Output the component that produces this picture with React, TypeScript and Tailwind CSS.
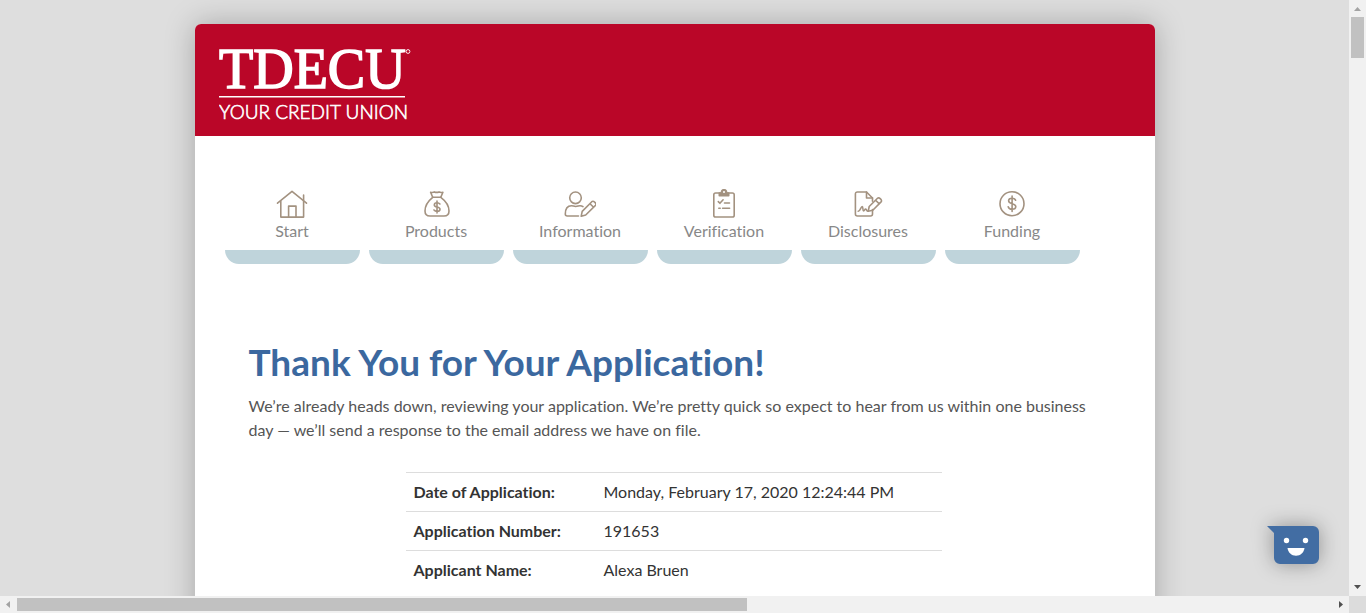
import type { ReactNode } from "react";

function HomeIcon() {
  return (
    <>
      <path d="M1.5 14.2 16 2.400l14.500 11.800" />
      <path d="M4.800 12.300v15.800h22.800V12.300" />
      <path d="M27.600 11.200V6" />
      <path d="M12.600 28V17.100h7.400v10.900" />
    </>
  );
}

function MoneyBagIcon() {
  return (
    <>
      <path d="M12.700 8.300 10.600 3.200c1.800.6 2.600.4 3.800-.3 1.700.7 2.900.7 4.600 0 1.200.7 2.100.9 3.900.3l-2.100 5.100z" />
      <path d="M12.700 8.300C8.700 11.500 5 16.500 5 22c0 3.300 1.900 5 5 5h14c3.100 0 5-1.700 5-5 0-5.500-3.900-10.500-8.200-13.700" />
      <path d="M19.900 15c-.7-.9-1.700-1.200-2.900-1.200-1.600 0-2.700.8-2.700 2.100 0 2.900 5.700 1.400 5.700 4.300 0 1.400-1.200 2.200-2.900 2.200-1.300 0-2.400-.5-3.100-1.400M17 12v12" />
    </>
  );
}

function PersonIcon() {
  return (
    <>
      <circle cx="11.500" cy="8.800" r="5.800" />
      <path d="M14.500 27H3.200c-1.400 0-1.900-.8-1.900-2 0-5 2-8.300 6.200-8.300 1.500 0 2.300.8 4.200.8 2 0 2.700-.8 4.300-.8 1.200 0 2.200.3 3 .9" />
      <path d="m17.200 27.200 1-4.800 9.600-9.700c1.600-1.500 5.400 1.900 3.700 3.700l-9.800 9.600zM26 14.700l3.600 3.600" />
    </>
  );
}

function ClipboardIcon() {
  return (
    <>
      <rect x="5.800" y="4" width="20.400" height="24" rx="1.800" />
      <path d="M11.300 4v2.700h9.400V4h-2.200c.2-2-.8-3.400-2.500-3.400S13.300 2 13.500 4z" fill="#a39280" />
      <circle cx="16" cy="3" r="1" fill="#fff" stroke="none" />
      <path d="m10.300 12.600 1.600 1.700 3.200-3.500M16.500 14h5M10.800 19.200h1.400M14.600 19.200h7" />
    </>
  );
}

function SignatureIcon() {
  return (
    <>
      <path d="M20.500 20.500V25c0 1.400-.6 2-2 2H5.400c-1.300 0-2-.6-2-2V5c0-1.300.7-2 2-2h9.100l6 6v3.200" />
      <path d="M14.500 3v6h6" />
      <path d="M6.200 22.300c2 .2 2.600-4.800 4-4.800 1.200 0 .2 4.500 1.400 4.500 1 0 1-2 2-2s.8 2.300 2.600 2.300" />
      <path d="m16.200 22.300 1-4.800 8.300-8.200c1.500-1.500 5.300 2 3.600 3.600l-8.300 8.300zM23.600 11.200l3.700 3.700" />
    </>
  );
}

function CoinIcon() {
  return (
    <>
      <circle cx="16" cy="14.700" r="12" />
      <path d="M19.600 11.300c-.4-1.300-1.700-2.100-3.500-2.100-2.100 0-3.500 1.100-3.500 2.600 0 3.700 7.200 2 7.200 5.800 0 1.700-1.500 2.700-3.700 2.700-2.100 0-3.500-.9-3.900-2.500M16.100 7v15.500" />
    </>
  );
}

const steps: { label: string; icon: ReactNode }[] = [
  { label: "Start", icon: <HomeIcon /> },
  { label: "Products", icon: <MoneyBagIcon /> },
  { label: "Information", icon: <PersonIcon /> },
  { label: "Verification", icon: <ClipboardIcon /> },
  { label: "Disclosures", icon: <SignatureIcon /> },
  { label: "Funding", icon: <CoinIcon /> },
];

const details = [
  ["Date of Application:", "Monday, February 17, 2020 12:24:44 PM"],
  ["Application Number:", "191653"],
  ["Applicant Name:", "Alexa Bruen"],
];

function Logo() {
  return (
    <svg viewBox="0 0 240 92" className="h-23 w-60" fill="#fff" role="img" aria-label="TDECU Your Credit Union">
      <text x="0" y="56" fontFamily="Liberation Serif, serif" fontSize="56" stroke="#fff" strokeWidth="1.600">
        TDECU
      </text>
      <circle cx="189" cy="19.500" r="1.900" fill="none" stroke="#fff" strokeWidth=".9" />
      <rect x="0" y="64" width="186" height="1.500" />
      <text x="0" y="87" fontFamily="Lato, sans-serif" fontSize="19" fontWeight="300" stroke="#fff" strokeWidth=".6">
        YOUR CREDIT UNION
      </text>
    </svg>
  );
}

function Progress() {
  return (
    <nav aria-label="Application progress" className="px-[30px] pt-[53px]">
      <ol className="flex gap-[9px]">
        {steps.map((step) => (
          <li key={step.label} className="flex w-[135px] flex-col items-center">
            <svg
              viewBox="0 0 32 32"
              className="size-8"
              fill="none"
              stroke="#a39280"
              strokeWidth="1.600"
              strokeLinejoin="round"
              strokeLinecap="round"
              aria-hidden="true"
            >
              {step.icon}
            </svg>
            <span className="text-base leading-5 text-[#888]">{step.label}</span>
            <span className="mt-[9px] h-3.5 w-full rounded-b-[14px] bg-[#bfd4db]" />
          </li>
        ))}
      </ol>
    </nav>
  );
}

function ChatButton() {
  return (
    <button type="button" aria-label="Open chat" className="absolute right-[30px] bottom-8 cursor-pointer">
      <svg viewBox="0 0 52 38" className="h-[38px] w-[52px] overflow-visible drop-shadow-[0_0_10px_rgba(0,0,0,0.35)]" aria-hidden="true">
        <path d="M0 0h46a6 6 0 0 1 6 6v26a6 6 0 0 1-6 6H13a6 6 0 0 1-6-6V7z" fill="#426da3" />
        <circle cx="19.500" cy="14.500" r="2.700" fill="#fff" />
        <circle cx="38.500" cy="14.500" r="2.700" fill="#fff" />
        <path d="M20.500 22h17c-.5 4.500-4 7.700-8.500 7.700s-8-3.200-8.500-7.700z" fill="#fff" />
      </svg>
    </button>
  );
}

function VerticalScrollbar() {
  return (
    <div className="flex w-[17px] shrink-0 flex-col items-center justify-between bg-[#f1f1f1]">
      <div className="flex flex-col items-center">
        <svg viewBox="0 0 17 17" className="size-[17px]" aria-hidden="true">
          <path d="M5 11h7L8.500 7z" fill="#a3a3a3" />
        </svg>
        <div className="h-[41px] w-[13px] bg-[#c1c1c1]" />
      </div>
      <svg viewBox="0 0 17 17" className="size-[17px]" aria-hidden="true">
        <path d="M5 6h7l-3.500 4z" fill="#505050" />
      </svg>
    </div>
  );
}

function HorizontalScrollbar() {
  return (
    <div className="flex h-[17px] shrink-0">
      <div className="flex grow items-center bg-[#f1f1f1]">
        <svg viewBox="0 0 17 17" className="size-[17px] shrink-0" aria-hidden="true">
          <path d="M10 5v7L6 8.500z" fill="#a3a3a3" />
        </svg>
        <div className="grow">
          <div className="h-[13px] w-[55.500%] bg-[#c1c1c1]" />
        </div>
        <svg viewBox="0 0 17 17" className="size-[17px] shrink-0" aria-hidden="true">
          <path d="M7 5v7l4-3.500z" fill="#505050" />
        </svg>
      </div>
      <div className="w-[17px] bg-[#dcdcdc]" />
    </div>
  );
}

export default function App() {
  return (
    <div className="flex h-screen flex-col bg-[#dedede] font-['Lato',sans-serif] [font-variant-ligatures:none]">
      <div className="flex min-h-0 grow">
        <div className="relative min-w-0 grow overflow-hidden">
          <div className="mx-auto min-h-full max-w-[960px] pt-6">
            <div className="min-h-screen rounded-t-md bg-white shadow-[0_0_30px_rgba(0,0,0,0.25)]">
              <header className="rounded-t-md bg-[#ba0628] px-6 pt-2 pb-3">
                <Logo />
              </header>
              <Progress />
              <main className="px-[54px] pt-[73px]">
                <h1 className="text-[37px] leading-[50px] font-bold text-[#3b689f]">Thank You for Your Application!</h1>
                <p className="mt-[7px] text-base leading-6 text-[#555]">
                  We’re already heads down, reviewing your application. We’re pretty quick so expect to hear from us within one business day
                  — we’ll send a response to the email address we have on file.
                </p>
                <table className="mt-[30px] ml-[157px] w-[63%] table-fixed border-collapse text-base leading-[22px] text-[#333]">
                  <tbody>
                    {details.map(([name, value]) => (
                      <tr key={name} className="border-t border-[#ddd]">
                        <th scope="row" className="w-[190px] p-2 text-left font-bold">
                          {name}
                        </th>
                        <td className="p-2">{value}</td>
                      </tr>
                    ))}
                  </tbody>
                </table>
              </main>
            </div>
          </div>
          <ChatButton />
        </div>
        <VerticalScrollbar />
      </div>
      <HorizontalScrollbar />
    </div>
  );
}
